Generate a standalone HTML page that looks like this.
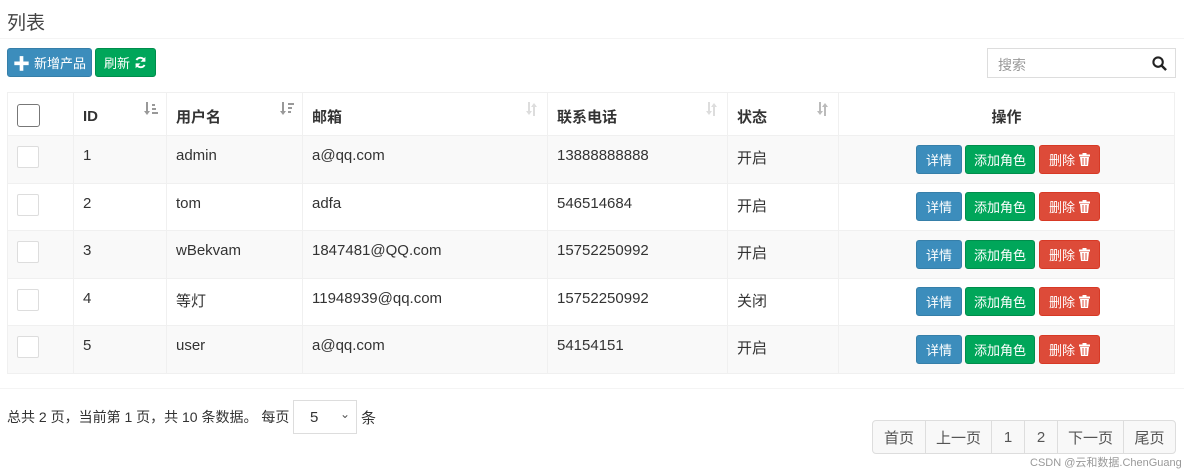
<!DOCTYPE html>
<html><head><meta charset="utf-8"><style>
*{box-sizing:border-box;margin:0;padding:0}
body{width:1184px;height:473px;background:#fff;font-family:"Liberation Sans","Noto Sans CJK SC",sans-serif;color:#333;position:relative;overflow:hidden;font-size:14px}
.abs{position:absolute}
.btn{position:absolute;border-radius:3px;color:#fff;font-size:13px;display:flex;align-items:center;justify-content:center;gap:4px}
.blue{background:#3c8dbc;border:1px solid #367fa9}
.green{background:#00a65a;border:1px solid #008d4c}
.red{background:#dd4b39;border:1px solid #d73925}
table{position:absolute;left:7px;top:92px;border-collapse:collapse;width:1168px}
td,th{border:1px solid #f0f0f0;text-align:left;padding-left:9px;font-size:15px;position:relative}
th{height:43px;font-weight:bold;padding-top:4px}
td{height:47.5px;vertical-align:top;padding-top:11px}
tr.odd td{background:#f9f9f9}
.cb{width:22px;height:22px;border:1px solid #ddd;background:#fff;border-radius:2px;margin-top:-1px}
.sort{position:absolute;right:8px;top:9px}
.pg{position:absolute;top:420px;height:34px;border:1px solid #ddd;background:#f8f8f8;display:flex;align-items:center;justify-content:center;font-size:15px;color:#555}
</style></head><body>
<div class="abs" style="left:7px;top:8px;font-size:19px;color:#444">列表</div>
<div class="abs" style="left:0;top:38px;width:1184px;height:1px;background:#f4f4f4"></div>
<div class="btn blue" style="left:7px;top:48px;width:85px;height:29px"><b style="font-size:17px">✚</b>新增产品</div>
<div class="btn green" style="left:95px;top:48px;width:61px;height:29px">刷新 <svg width="13" height="13" viewBox="0 0 16 16"><path d="M13 6A5.5 5.5 0 0 0 3 5M3 10a5.5 5.5 0 0 0 10 1" stroke="#fff" stroke-width="2.4" fill="none"/><path d="M14 1v6H8z M2 15V9h6z" fill="#fff"/></svg></div>
<div class="abs" style="left:987px;top:48px;width:189px;height:30px;border:1px solid #ddd;font-size:14px;color:#999;padding:6px 0 0 10px">搜索
<svg class="abs" style="right:8px;top:7px" width="15" height="15" viewBox="0 0 16 16"><circle cx="6.5" cy="6.5" r="5" stroke="#222" stroke-width="2.2" fill="none"/><path d="M10 10l5 5" stroke="#222" stroke-width="2.6"/></svg></div>
<table>
<tr><th style="width:66px"><div class="cb" style="border-color:#777;border-radius:3px;width:23px;height:23px"></div></th>
<th style="width:93px">ID<svg class="sort" width="14" height="14" viewBox="0 0 14 14" fill="#999"><path d="M2 0h2v9h2l-3 4-3-4h2z"/><rect x="8" y="2" width="3" height="2"/><rect x="8" y="6" width="4" height="2"/><rect x="8" y="10" width="6" height="2"/></svg></th>
<th style="width:136px">用户名<svg class="sort" width="14" height="14" viewBox="0 0 14 14" fill="#999"><path d="M2 0h2v9h2l-3 4-3-4h2z"/><rect x="8" y="1" width="6" height="2"/><rect x="8" y="5" width="4" height="2"/><rect x="8" y="9" width="3" height="2"/></svg></th>
<th style="width:245px">邮箱<svg class="sort" width="14" height="14" viewBox="0 0 14 14" fill="#ddd"><path d="M3 0h2v9h2l-3 4-3-4h2zM10 14h-2V5H6l3-4 3 4h-2z"/></svg></th>
<th style="width:180px">联系电话<svg class="sort" width="14" height="14" viewBox="0 0 14 14" fill="#ddd"><path d="M3 0h2v9h2l-3 4-3-4h2zM10 14h-2V5H6l3-4 3 4h-2z"/></svg></th>
<th style="width:111px">状态<svg class="sort" width="14" height="14" viewBox="0 0 14 14" fill="#bbb"><path d="M3 0h2v9h2l-3 4-3-4h2zM10 14h-2V5H6l3-4 3 4h-2z"/></svg></th>
<th style="text-align:center;padding-left:0">操作</th></tr>
<tr class="odd"><td><div class="cb"></div></td><td>1</td><td>admin</td><td>a@qq.com</td><td>13888888888</td><td>开启</td><td></td></tr>
<tr><td><div class="cb"></div></td><td>2</td><td>tom</td><td>adfa</td><td>546514684</td><td>开启</td><td></td></tr>
<tr class="odd"><td><div class="cb"></div></td><td>3</td><td>wBekvam</td><td>1847481@QQ.com</td><td>15752250992</td><td>开启</td><td></td></tr>
<tr><td><div class="cb"></div></td><td>4</td><td>等灯</td><td>11948939@qq.com</td><td>15752250992</td><td>关闭</td><td></td></tr>
<tr class="odd"><td><div class="cb"></div></td><td>5</td><td>user</td><td>a@qq.com</td><td>54154151</td><td>开启</td><td></td></tr>
</table>
<div id="ops"></div>
<script>
var h='';[145,192,240,287,335].forEach(function(y){h+='<div class="btn blue" style="left:916px;top:'+y+'px;width:46px;height:29px">详情</div><div class="btn green" style="left:965px;top:'+y+'px;width:70px;height:29px">添加角色</div><div class="btn red" style="left:1039px;top:'+y+'px;width:61px;height:29px">删除 <svg width="11" height="13" viewBox="0 0 11 13"><rect x="0" y="1.5" width="11" height="2" fill="#fff"/><rect x="3.5" y="0" width="4" height="2" fill="#fff"/><path d="M1 4h9l-1 9H2z" fill="#fff"/><path d="M4 5v7M7 5v7" stroke="#dd4b39"/></svg></div>'});document.getElementById('ops').innerHTML=h;
</script>
<div class="abs" style="left:0;top:388px;width:1184px;height:1px;background:#f4f4f4"></div>
<div class="abs" style="left:7px;top:407px;font-size:14px;white-space:nowrap">总共 2 页，当前第 1 页，共 10 条数据。 每页</div>
<div class="abs" style="left:293px;top:400px;width:64px;height:34px;border:1px solid #ddd;font-size:15px;padding:8px 0 0 16px;background:#fff">5<span class="abs" style="right:6px;top:6px;font-size:12px;color:#555">⌄</span></div>
<div class="abs" style="left:361px;top:407px;font-size:15px">条</div>
<div class="pg" style="left:872px;width:54px;border-radius:4px 0 0 4px">首页</div>
<div class="pg" style="left:925px;width:67px">上一页</div>
<div class="pg" style="left:991px;width:34px">1</div>
<div class="pg" style="left:1024px;width:34px">2</div>
<div class="pg" style="left:1057px;width:67px">下一页</div>
<div class="pg" style="left:1123px;width:53px;border-radius:0 4px 4px 0">尾页</div>
<div class="abs" style="left:1030px;top:454px;font-size:11px;color:#999">CSDN @云和数据.ChenGuang</div>
</body></html>
